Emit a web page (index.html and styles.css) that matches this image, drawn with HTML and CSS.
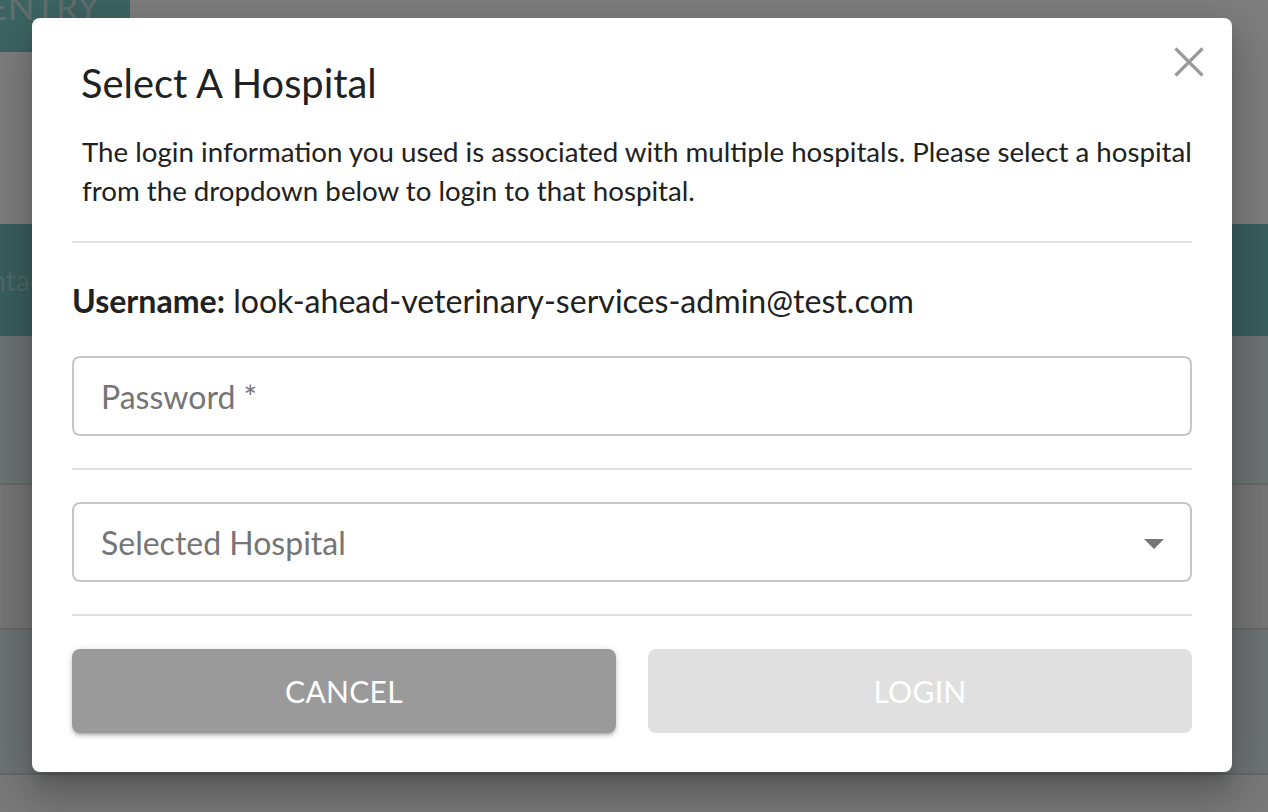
FILE: index.html
```html
<!DOCTYPE html>
<html>
<head>
<meta charset="utf-8">
<link rel="stylesheet" href="styles.css">
</head>
<body>
<div class="page">
  <div class="topbar"><div class="entry-btn">ENTRY</div></div>
  <div class="table-head"><span class="th-text">Contact</span></div>
  <div class="row row-first row-tint"></div>
  <div class="row"></div>
  <div class="row row-tint"></div>
  <div class="row row-last"></div>
</div>
<div class="overlay">
  <div class="dialog">
    <button class="close" aria-label="close">
      <svg width="30" height="30" viewBox="0 0 30 30"><path d="M1.5 1.5 L28.5 28.5 M28.5 1.5 L1.5 28.5" stroke="#9a9a9a" stroke-width="3.2" fill="none"/></svg>
    </button>
    <h2 class="title">Select A Hospital</h2>
    <p class="desc">The login information you used is associated with multiple hospitals. Please select a hospital from the dropdown below to login to that hospital.</p>
    <hr class="divider">
    <div class="username"><b>Username:</b> look-ahead-veterinary-services-admin@test.com</div>
    <div class="field"><span class="placeholder">Password *</span></div>
    <hr class="divider">
    <div class="field select"><span class="placeholder">Selected Hospital</span><span class="caret"></span></div>
    <hr class="divider">
    <div class="actions">
      <button class="btn btn-cancel">CANCEL</button>
      <button class="btn btn-login">LOGIN</button>
    </div>
  </div>
</div>
</body>
</html>
```
FILE: styles.css
```css
html, body { margin: 0; padding: 0; }
body { width: 1268px; height: 812px; overflow: hidden; font-family: Lato, "Open Sans", sans-serif; background: #f4f4f4; position: relative; }
.page { display: flex; flex-direction: column; height: 812px; }
.topbar { height: 224px; flex: none; background: #fcfcfc; }
.entry-btn { width: 130px; height: 52px; background: #7bcac6; color: #c8dede; font-size: 35px; line-height: 12px; text-indent: -13px; overflow: hidden; letter-spacing: 0.5px; white-space: nowrap; }
.table-head { height: 112px; flex: none; background: #74bebc; display: flex; align-items: center; color: #a0d2d0; font-size: 28px; }
.th-text { margin-left: -44px; }
.row { height: 143px; flex: none; border-top: 2px solid #d0d0d0; background: #ececec; }
.row-first { border-top: 0; height: 147px; }
.row-tint { background: #dde6e6; }
.row-last { height: 40px; background: #f2f2f2; }
.overlay { position: absolute; inset: 0; background: rgba(0,0,0,0.5); }
.dialog { position: absolute; left: 32px; top: 18px; width: 1200px; height: 754px; box-sizing: border-box; padding: 40px 40px 0; background: #fff; border-radius: 8px; box-shadow: 0 11px 15px -7px rgba(0,0,0,.2), 0 24px 38px 3px rgba(0,0,0,.14), 0 9px 46px 8px rgba(0,0,0,.12); }
.close { position: absolute; top: 29px; right: 28px; padding: 0; border: 0; background: none; width: 30px; height: 30px; }
.close svg { display: block; }
.title { margin: 0 0 0 9px; font-size: 39.8px; font-weight: 400; color: #212121; line-height: 50px; }
.desc { margin: 24px -16px 0 10px; font-size: 27.7px; line-height: 39px; color: #212121; }
.divider { border: 0; border-top: 2px solid #e0e0e0; margin: 0; }
.desc + .divider { margin-top: 31px; }
.username { margin-top: 38px; font-size: 32.1px; line-height: 40px; color: #212121; }
.username b { font-weight: 700; }
.field { margin-top: 35px; height: 80px; box-sizing: border-box; border: 2px solid #c6c6c6; border-radius: 8px; display: flex; align-items: center; padding: 0 27px; position: relative; }
.field + .divider { margin-top: 32px; }
.field.select { margin-top: 32px; }
.placeholder { font-size: 32px; color: #757575; }
.caret { position: absolute; right: 26px; top: 35px; width: 0; height: 0; border-left: 10px solid transparent; border-right: 10px solid transparent; border-top: 10px solid #757575; }
.actions { margin-top: 33px; display: flex; gap: 32px; }
.btn { flex: 1; height: 84px; border: 0; border-radius: 8px; font-family: Lato, sans-serif; font-size: 30px; color: #fff; letter-spacing: 0.3px; }
.btn-cancel { background: #9a9a9a; box-shadow: 0 3px 3px -2px rgba(0,0,0,.2), 0 3px 4px 0 rgba(0,0,0,.14), 0 1px 8px 0 rgba(0,0,0,.12); }
.btn-login { background: #e0e0e0; }
```
